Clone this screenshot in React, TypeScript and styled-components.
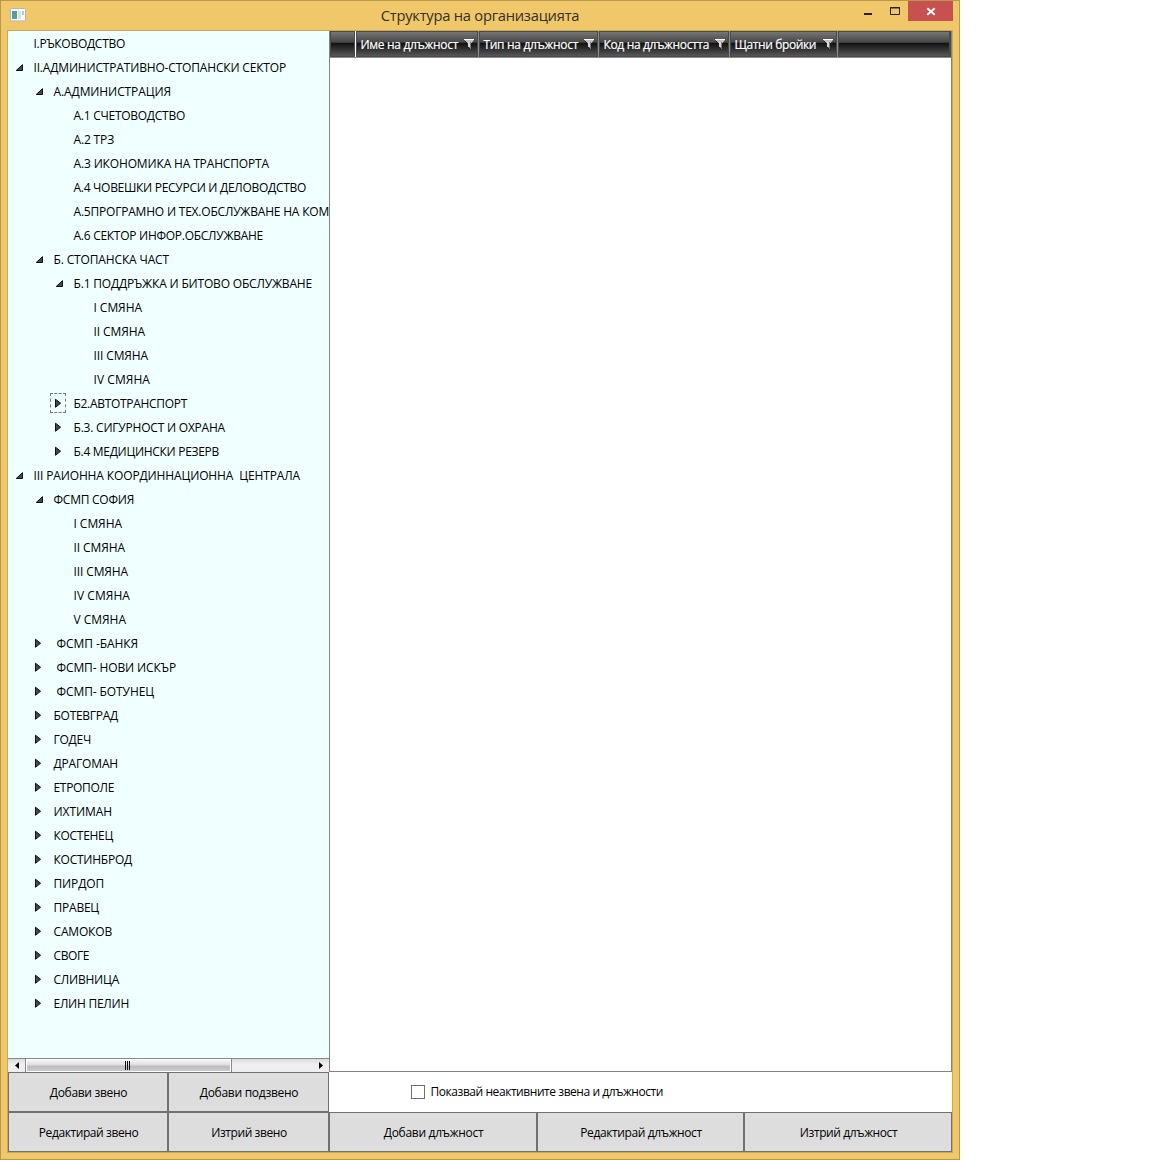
import React, { useLayoutEffect, useRef, useState } from 'react';
import styled, { createGlobalStyle } from 'styled-components';

const Global = createGlobalStyle`
  * { box-sizing: border-box; }
  body { margin: 0; background: #fff; font-family: "Open Sans", "Noto Sans", sans-serif; font-size: 12px; color: #000; }
  button { font: inherit; color: inherit; }
`;

const Fitted = styled.span`
  display: inline-block;
  white-space: pre;
  line-height: 16px;
`;

/* Tracks the label so that it occupies the given width. */
function Label({ text, width }: { text: string; width: number }) {
  const ref = useRef<HTMLSpanElement>(null);
  const [spacing, setSpacing] = useState(0);
  useLayoutEffect(() => {
    const natural = ref.current!.getBoundingClientRect().width;
    setSpacing((width + 0.5 - natural) / text.length);
  }, []);
  return <Fitted ref={ref} style={{ letterSpacing: spacing }}>{text}</Fitted>;
}

const Window = styled.div`
  width: 960px;
  height: 1160px;
  background: #f0c869;
  border: 1px solid #b8984f;
  padding: 0 6px 6px;
  display: flex;
  flex-direction: column;
`;

const TitleBar = styled.header`
  height: 29px;
  display: grid;
  grid-template-columns: 92px 1fr 92px;
  align-items: start;
`;

const AppIcon = styled.svg`
  margin: 7px 0 0 3px;
  display: block;
`;

const Title = styled.h1`
  margin: 0;
  padding-top: 6px;
  font-size: 14.7px;
  font-weight: 400;
  line-height: 16px;
  color: #33302a;
  text-align: center;
`;

const Controls = styled.div`
  display: flex;
  justify-content: flex-end;
`;

const Control = styled.button<{ $w: number; $close?: boolean }>`
  width: ${p => p.$w}px;
  height: 20px;
  padding: 0;
  border: 0;
  background: ${p => (p.$close ? '#c75050' : 'transparent')};
  svg { display: block; }
`;

const Body = styled.main`
  width: 946px;
  height: 1123px;
  border: 1px solid #cda854;
  background: #fff;
  display: grid;
  grid-template-columns: 321px 623px;
`;

const Side = styled.section`
  display: grid;
  grid-template-rows: 1027px 14px 40px 40px;
  min-width: 0;
`;

const Tree = styled.ul`
  list-style: none;
  margin: 0;
  padding: 0;
  overflow: hidden;
  background: #f0ffff;
`;

const Node = styled.li<{ $level: number }>`
  height: 24px;
  padding-left: ${p => 2 + p.$level * 20}px;
  display: flex;
  align-items: center;
  white-space: nowrap;
  ${Fitted} { margin-top: 2px; }
`;

const Toggle = styled.span<{ $focus?: boolean }>`
  flex: none;
  width: 16px;
  height: 20px;
  margin-right: 7.5px;
  display: grid;
  place-items: center;
  svg { display: block; }
  ${p => p.$focus && 'outline: 1px dashed #6f7777; outline-offset: -1px;'}
`;

const ScrollBar = styled.div`
  border-top: 1px solid #888;
  display: grid;
  grid-template-columns: 17px 207px 1fr 17px;
  background: linear-gradient(#dcdcdc, #f0f0f0 40%, #eee);
`;

const ScrollArrow = styled.span`
  display: grid;
  place-items: center;
`;

const Thumb = styled.span`
  border: solid #8a8a8a;
  border-width: 0 1px;
  box-shadow: inset 0 0 0 1px #fff;
  background: linear-gradient(#f3f3f3 0 10%, #dedede 48%, #bcbcbc 52%, #cfcfcf);
  display: flex;
  align-items: center;
  justify-content: center;
  gap: 1px;
  padding-right: 2px;
`;

const Grip = styled.i`
  width: 1px;
  height: 9px;
  background: #111;
`;

const ButtonRow = styled.div<{ $columns: string }>`
  display: grid;
  grid-template-columns: ${p => p.$columns};
`;

const Button = styled.button`
  border: 1px solid #707070;
  background: #ddd;
  padding: 2px 0 0 1px;
  display: flex;
  align-items: center;
  justify-content: center;
`;

const Details = styled.section`
  display: grid;
  grid-template-rows: 1041px 40px 40px;
`;

const Grid = styled.div`
  border: 1px solid #808386;
  border-top: 0;
  background: #fff;
`;

const GridHeader = styled.div`
  height: 27px;
  display: grid;
  grid-template-columns: 26px 123px 120px 131px 108px 1fr;
  border-bottom: 1px solid #8c8c8c;
`;

const HeaderCell = styled.div<{ $edge?: string }>`
  border-right: 1px solid ${p => p.$edge || '#8a8a8a'};
  box-shadow: inset 0 0 0 1px #4b4b4b;
  background: linear-gradient(#7a7a7a, #464646 44%, #0d0d0d 45%, #1d1d1d 55%, #5c5c5c);
  color: #fff;
  -webkit-text-stroke: 0.2px #fff;
  display: flex;
  align-items: center;
  justify-content: space-between;
  padding: 2px 3px 0 4.5px;
  svg { flex: none; margin-top: -3px; }
`;

const Filter = styled.label`
  display: flex;
  align-items: center;
  padding: 0 0 0 82px;
  gap: 5.5px;
`;

const CheckBox = styled.input`
  appearance: none;
  margin: 0;
  width: 14px;
  height: 14px;
  border: 1px solid #707070;
  background: #fff;
`;

type Item = [level: number, state: '' | 'open' | 'closed' | 'focus', text: string, width: number];

const items: Item[] = [
  [0, '', 'І.РЪКОВОДСТВО', 91],
  [0, 'open', 'ІІ.АДМИНИСТРАТИВНО-СТОПАНСКИ СЕКТОР', 252],
  [1, 'open', 'А.АДМИНИСТРАЦИЯ', 117],
  [2, '', 'А.1 СЧЕТОВОДСТВО', 111],
  [2, '', 'А.2 ТРЗ', 40],
  [2, '', 'А.3 ИКОНОМИКА НА ТРАНСПОРТА', 195],
  [2, '', 'А.4 ЧОВЕШКИ РЕСУРСИ И ДЕЛОВОДСТВО', 232],
  [2, '', 'А.5ПРОГРАМНО И ТЕХ.ОБСЛУЖВАНЕ НА КОМ', 255],
  [2, '', 'А.6 СЕКТОР ИНФОР.ОБСЛУЖВАНЕ', 189],
  [1, 'open', 'Б. СТОПАНСКА ЧАСТ', 115],
  [2, 'open', 'Б.1 ПОДДРЪЖКА И БИТОВО ОБСЛУЖВАНЕ', 238],
  [3, '', 'I СМЯНА', 48],
  [3, '', 'II СМЯНА', 51],
  [3, '', 'III СМЯНА', 54],
  [3, '', 'IV СМЯНА', 56],
  [2, 'focus', 'Б2.АВТОТРАНСПОРТ', 113],
  [2, 'closed', 'Б.3. СИГУРНОСТ И ОХРАНА', 151],
  [2, 'closed', 'Б.4 МЕДИЦИНСКИ РЕЗЕРВ', 145],
  [0, 'open', 'III РАИОННА КООРДИННАЦИОННА  ЦЕНТРАЛА', 266],
  [1, 'open', 'ФСМП СОФИЯ', 80],
  [2, '', 'I СМЯНА', 48],
  [2, '', 'II СМЯНА', 51],
  [2, '', 'III СМЯНА', 54],
  [2, '', 'IV СМЯНА', 56],
  [2, '', 'V СМЯНА', 52],
  [1, 'closed', ' ФСМП -БАНКЯ', 84],
  [1, 'closed', ' ФСМП- НОВИ ИСКЪР', 122],
  [1, 'closed', ' ФСМП- БОТУНЕЦ', 100],
  [1, 'closed', 'БОТЕВГРАД', 64],
  [1, 'closed', 'ГОДЕЧ', 37],
  [1, 'closed', 'ДРАГОМАН', 64],
  [1, 'closed', 'ЕТРОПОЛЕ', 60],
  [1, 'closed', 'ИХТИМАН', 58],
  [1, 'closed', 'КОСТЕНЕЦ', 59],
  [1, 'closed', 'КОСТИНБРОД', 78],
  [1, 'closed', 'ПИРДОП', 50],
  [1, 'closed', 'ПРАВЕЦ', 45],
  [1, 'closed', 'САМОКОВ', 58],
  [1, 'closed', 'СВОГЕ', 35],
  [1, 'closed', 'СЛИВНИЦА', 65],
  [1, 'closed', 'ЕЛИН ПЕЛИН', 75],
];

const columns: [string, number][] = [
  ['Име на длъжност', 97],
  ['Тип на длъжност', 94],
  ['Код на длъжността', 105],
  ['Щатни бройки', 81],
];

function Arrow({ state }: { state: Item[1] }) {
  if (!state) return null;
  return (
    <svg width="10" height="12" viewBox="0 0 10 12">
      {state === 'open'
        ? <path d="M9.5 3.7v5.8H3.2z" fill="#484848" stroke="#111" />
        : <path d="M2.5 2.2v8.1L7.6 6.2z" fill="#484848" stroke="#111" />}
    </svg>
  );
}

function Funnel() {
  return (
    <svg width="12" height="12" viewBox="0 0 12 12">
      <path d="M1 1h10v1L8 5.5V11L5 8.5v-3L1 2z" fill="#c4c4c4" />
      <path d="M1 1.5h10" stroke="#fff" />
      <path d="M1.5 2.5L4.5 5.5V8.5L7.5 11.2" fill="none" stroke="#222" />
      <path d="M6 4v5" stroke="#eee" />
      <path d="M7.5 4v6" stroke="#777" />
    </svg>
  );
}

export default function App() {
  return (
    <>
      <Global />
      <Window>
        <TitleBar>
          <AppIcon width="16" height="14" viewBox="0 0 16 14">
            <defs>
              <linearGradient id="pane" x2="1" y2="1">
                <stop stopColor="#5b8fb5" />
                <stop offset="1" stopColor="#4fae7c" />
              </linearGradient>
            </defs>
            <rect x=".5" y=".5" width="15" height="12.5" rx="1" fill="#f7f7f7" stroke="#b3b3b8" />
            <rect x="2" y="3" width="5" height="8" fill="url(#pane)" />
            <rect x="8" y="3" width="3" height="8" fill="#dedede" />
            <rect x="12" y="3" width="2" height="4" fill="#a8d4b4" />
          </AppIcon>
          <Title><Label text="Структура на организацията" width={198} /></Title>
          <Controls>
            <Control $w={27} aria-label="Minimize">
              <svg width="27" height="20"><path d="M10 13h8" stroke="#222" strokeWidth="2" /></svg>
            </Control>
            <Control $w={27} aria-label="Maximize">
              <svg width="27" height="20"><path d="M9.5 6.5h9v7h-9zM9 7h10" fill="none" stroke="#222" /></svg>
            </Control>
            <Control $w={45} $close aria-label="Close">
              <svg width="45" height="20"><path d="M19.3 7.3l7.4 6.4M26.7 7.3l-7.4 6.4" stroke="#fff" strokeWidth="1.9" /></svg>
            </Control>
          </Controls>
        </TitleBar>
        <Body>
          <Side>
            <Tree>
              {items.map(([level, state, text, width], i) => (
                <Node key={i} $level={level}>
                  <Toggle $focus={state === 'focus'}><Arrow state={state} /></Toggle>
                  <Label text={text} width={width} />
                </Node>
              ))}
            </Tree>
            <ScrollBar>
              <ScrollArrow><svg width="4" height="7"><path d="M4 0v7L0 3.5z" /></svg></ScrollArrow>
              <Thumb><Grip /><Grip /><Grip /></Thumb>
              <span />
              <ScrollArrow><svg width="4" height="7"><path d="M0 0v7l4-3.5z" /></svg></ScrollArrow>
            </ScrollBar>
            <ButtonRow $columns="160px 161px">
              <Button><Label text="Добави звено" width={77} /></Button>
              <Button><Label text="Добави подзвено" width={98} /></Button>
            </ButtonRow>
            <ButtonRow $columns="160px 161px">
              <Button><Label text="Редактирай звено" width={99} /></Button>
              <Button><Label text="Изтрий звено" width={75} /></Button>
            </ButtonRow>
          </Side>
          <Details>
            <Grid>
              <GridHeader>
                <HeaderCell $edge="#fff" />
                {columns.map(([text, width]) => (
                  <HeaderCell key={text}><Label text={text} width={width} /><Funnel /></HeaderCell>
                ))}
                <HeaderCell $edge="#4b4b4b" />
              </GridHeader>
            </Grid>
            <Filter>
              <CheckBox type="checkbox" />
              <Label text="Показвай неактивните звена и длъжности" width={232} />
            </Filter>
            <ButtonRow $columns="208px 207px 208px">
              <Button><Label text="Добави длъжност" width={99} /></Button>
              <Button><Label text="Редактирай длъжност" width={121} /></Button>
              <Button><Label text="Изтрий длъжност" width={97} /></Button>
            </ButtonRow>
          </Details>
        </Body>
      </Window>
    </>
  );
}
